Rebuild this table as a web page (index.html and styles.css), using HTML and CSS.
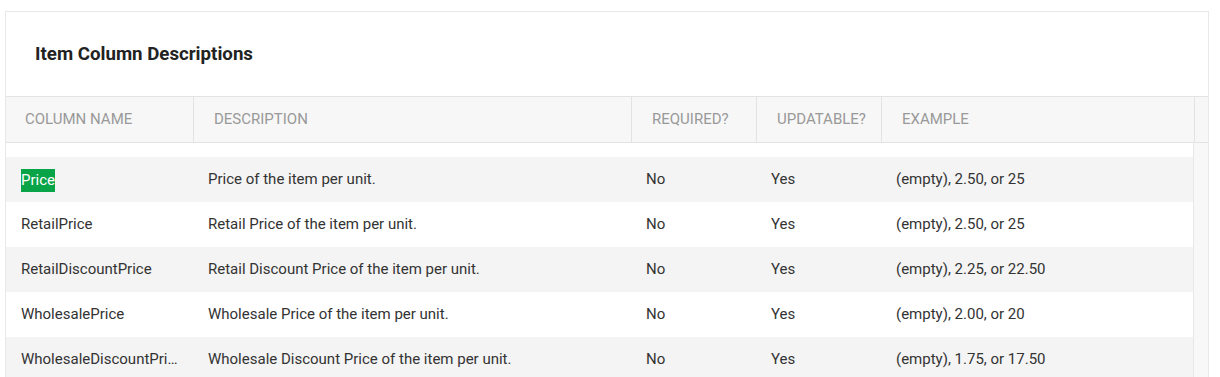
FILE: index.html
```html
<!DOCTYPE html>
<html>
<head>
<meta charset="utf-8">
<link rel="stylesheet" href="styles.css">
</head>
<body>
<div class="card">
  <div class="title">Item Column Descriptions</div>
  <div class="head">
    <div class="hc">Column Name</div>
    <div class="hc">Description</div>
    <div class="hc">Required?</div>
    <div class="hc">Updatable?</div>
    <div class="hc">Example</div>
    <div class="hc hc-scroll"></div>
  </div>
  <div class="body">
    <div class="rows">
      <div class="row odd">
        <div class="c c1"><span class="hl">Price</span></div>
        <div class="c">Price of the item per unit.</div>
        <div class="c">No</div>
        <div class="c">Yes</div>
        <div class="c">(empty), 2.50, or 25</div>
      </div>
      <div class="row">
        <div class="c c1">RetailPrice</div>
        <div class="c">Retail Price of the item per unit.</div>
        <div class="c">No</div>
        <div class="c">Yes</div>
        <div class="c">(empty), 2.50, or 25</div>
      </div>
      <div class="row odd">
        <div class="c c1">RetailDiscountPrice</div>
        <div class="c">Retail Discount Price of the item per unit.</div>
        <div class="c">No</div>
        <div class="c">Yes</div>
        <div class="c">(empty), 2.25, or 22.50</div>
      </div>
      <div class="row">
        <div class="c c1">WholesalePrice</div>
        <div class="c">Wholesale Price of the item per unit.</div>
        <div class="c">No</div>
        <div class="c">Yes</div>
        <div class="c">(empty), 2.00, or 20</div>
      </div>
      <div class="row odd">
        <div class="c c1">WholesaleDiscountPrice</div>
        <div class="c">Wholesale Discount Price of the item per unit.</div>
        <div class="c">No</div>
        <div class="c">Yes</div>
        <div class="c">(empty), 1.75, or 17.50</div>
      </div>
    </div>
    <div class="track"></div>
  </div>
</div>
</body>
</html>
```

FILE: styles.css
```css
html, body {
  margin: 0;
  padding: 0;
  background: #fff;
  overflow: hidden;
}
body {
  font-family: Roboto, "Liberation Sans", sans-serif;
  color: #333;
}
.card {
  margin: 11px 0 0 5px;
  width: 1204px;
  box-sizing: border-box;
  border: 1px solid #e8e8e8;
  background: #fff;
}
.title {
  height: 84px;
  display: flex;
  align-items: center;
  padding-left: 29px;
  font-size: 18.7px;
  font-weight: 700;
  color: #222;
}
.head {
  display: grid;
  grid-template-columns: 188px 438px 125px 125px 313px 1fr;
  height: 47px;
  box-sizing: border-box;
  border-top: 1px solid #e3e3e3;
  border-bottom: 1px solid #e3e3e3;
  background: #f7f7f7;
}
.hc {
  display: flex;
  align-items: center;
  padding-left: 20px;
  padding-bottom: 2px;
  border-right: 1px solid #e3e3e3;
  font-size: 15px;
  color: #999;
  text-transform: uppercase;
}
.hc:first-child { padding-left: 19px; }
.hc-scroll { border-right: none; }
.body {
  display: flex;
}
.rows {
  width: 1187px;
  padding-top: 14px;
}
.track {
  flex: 1;
  background: #f8f8f8;
  border-left: 1px solid #e8e8e8;
}
.row {
  display: grid;
  grid-template-columns: 188px 438px 125px 125px 1fr;
  height: 45px;
  background: #fff;
}
.row.odd { background: #f4f4f4; }
.c {
  display: flex;
  align-items: center;
  padding-left: 14px;
  padding-bottom: 1px;
  font-size: 15px;
  color: #333;
  white-space: nowrap;
  overflow: hidden;
  min-width: 0;
}
.c1 {
  padding-left: 15px;
  padding-right: 15px;
  padding-bottom: 0;
  display: block;
  line-height: 44px;
  text-overflow: ellipsis;
}
.hl {
  display: inline-block;
  background: #09a448;
  color: #fff;
  line-height: 23px;
  vertical-align: middle;
}
```
